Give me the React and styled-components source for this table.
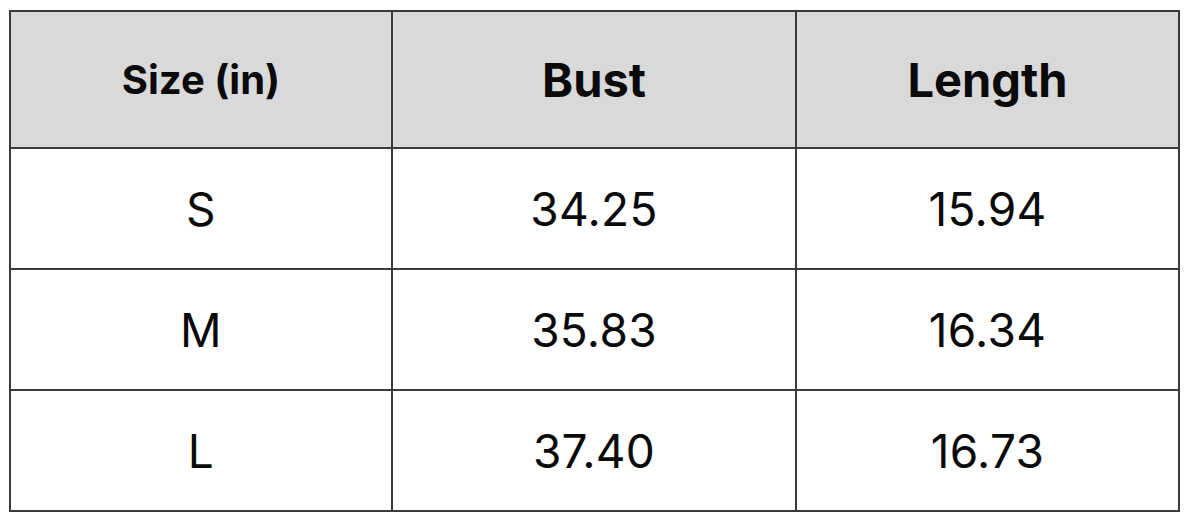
import styled, { createGlobalStyle } from "styled-components";

const GlobalStyle = createGlobalStyle`
  body {
    margin: 0;
    background: #ffffff;
    font-family: Inter, "Liberation Sans", Arial, sans-serif;
  }
`;

const rows = [
  { size: "S", bust: "34.25", length: "15.94" },
  { size: "M", bust: "35.83", length: "16.34" },
  { size: "L", bust: "37.40", length: "16.73" },
];

const App = () => {
  return (
    <>
      <GlobalStyle />
      <Wrap>
        <Table>
          <colgroup>
            <col style={{ width: 382 }} />
            <col style={{ width: 404 }} />
            <col style={{ width: 383 }} />
          </colgroup>
          <thead>
            <tr>
              <Head $small>Size (in)</Head>
              <Head>Bust</Head>
              <Head>Length</Head>
            </tr>
          </thead>
          <tbody>
            {rows.map((r) => (
              <tr key={r.size}>
                <Cell>{r.size}</Cell>
                <Cell>{r.bust}</Cell>
                <Cell>{r.length}</Cell>
              </tr>
            ))}
          </tbody>
        </Table>
      </Wrap>
    </>
  );
};

const Wrap = styled.div`
  padding: 10px 0 0 9px;
`;

const Table = styled.table`
  border-collapse: collapse;
  table-layout: fixed;
  width: 1171px;
  border: 2px solid #3a3a3a;
`;

const Head = styled.th`
  height: 135px;
  padding: 0;
  background: #d9d9d9;
  border: 2px solid #3a3a3a;
  color: #0a0a0a;
  font-weight: 700;
  font-size: ${(p) => (p.$small ? "40px" : "47px")};
  text-align: center;
  vertical-align: middle;
`;

const Cell = styled.td`
  height: 119px;
  padding: 0;
  border: 2px solid #3a3a3a;
  color: #0a0a0a;
  font-size: 46px;
  font-weight: 400;
  letter-spacing: 0.3px;
  text-align: center;
  vertical-align: middle;
`;

export default App;
